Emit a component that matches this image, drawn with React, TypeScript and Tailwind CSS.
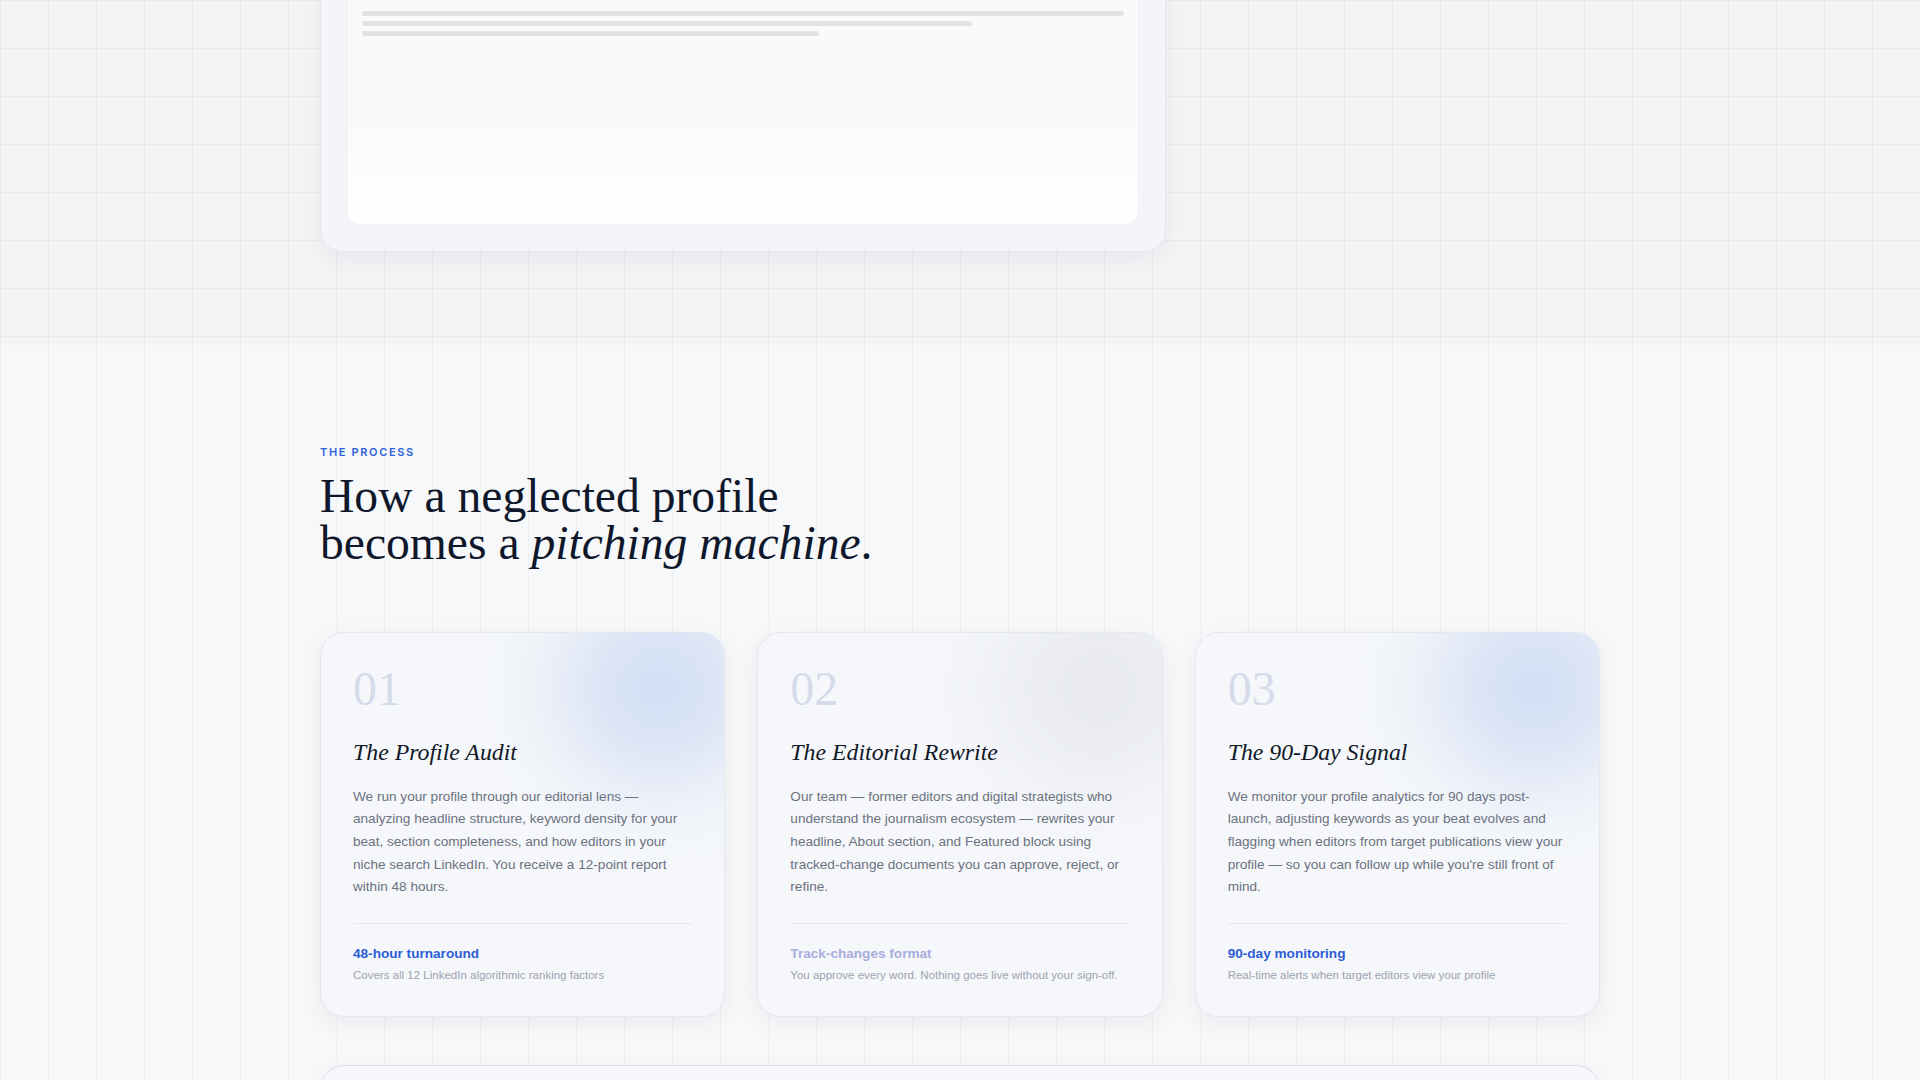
import React from 'react';

type Step = {
  num: string;
  title: string;
  body: string;
  label: string;
  labelClass: string;
  note: string;
  blobClass: string;
};

const steps: Step[] = [
  {
    num: '01',
    title: 'The Profile Audit',
    body: 'We run your profile through our editorial lens — analyzing headline structure, keyword density for your beat, section completeness, and how editors in your niche search LinkedIn. You receive a 12-point report within 48 hours.',
    label: '48-hour turnaround',
    labelClass: 'text-[#2b5cd6]',
    note: 'Covers all 12 LinkedIn algorithmic ranking factors',
    blobClass: 'bg-[#c6d5f3]',
  },
  {
    num: '02',
    title: 'The Editorial Rewrite',
    body: 'Our team — former editors and digital strategists who understand the journalism ecosystem — rewrites your headline, About section, and Featured block using tracked-change documents you can approve, reject, or refine.',
    label: 'Track-changes format',
    labelClass: 'text-[#a7aedd]',
    note: 'You approve every word. Nothing goes live without your sign-off.',
    blobClass: 'bg-[#e2e4eb]',
  },
  {
    num: '03',
    title: 'The 90-Day Signal',
    body: "We monitor your profile analytics for 90 days post-launch, adjusting keywords as your beat evolves and flagging when editors from target publications view your profile — so you can follow up while you're still front of mind.",
    label: '90-day monitoring',
    labelClass: 'text-[#2b5cd6]',
    note: 'Real-time alerts when target editors view your profile',
    blobClass: 'bg-[#c6d5f3]',
  },
];

function StepCard({ step }: { step: Step }) {
  return (
    <div className="relative overflow-hidden rounded-[24px] border border-[#e4e7ee] bg-[#f5f7fa] p-8 shadow-[0_6px_24px_rgba(15,23,42,0.06)]">
      <div className={`pointer-events-none absolute right-[-36px] top-[-40px] h-[190px] w-[200px] rounded-full opacity-70 blur-[44px] ${step.blobClass}`} />
      <div className="relative">
        <div className="font-['Liberation_Serif',serif] text-[48px] leading-none text-[#d6dbeb]">{step.num}</div>
        <h3 className="mt-6 font-['Liberation_Serif',serif] text-[23.8px] italic leading-[1.3] text-[#111827]">{step.title}</h3>
        <p className="mt-[18px] font-['Liberation_Sans',sans-serif] text-[13.6px] leading-[1.67] text-[#6b7280]">{step.body}</p>
        <div className="mt-6 border-t border-[#e7e9ee] pt-5 font-['Liberation_Sans',sans-serif]">
          <div className={`text-[13.6px] font-bold leading-[1.4] ${step.labelClass}`}>{step.label}</div>
          <div className="mt-1 text-[11.5px] leading-[1.5] text-[#9ca3af]">{step.note}</div>
        </div>
      </div>
    </div>
  );
}

export default function App() {
  return (
    <div className="min-h-screen overflow-hidden bg-[#f7f8fa]">
      {/* hero tail with grid */}
      <section className="flow-root h-[345px] bg-[#f3f4f6] bg-[linear-gradient(to_right,#e8eaed_1px,transparent_1px),linear-gradient(to_bottom,#e8eaed_1px,transparent_1px)] bg-[size:48px_48px]">
        <div className="mx-auto w-[1280px]">
          <div className="-mt-[200px] h-[452px] w-[846px] rounded-[22px] border border-[#e5e7eb] bg-[#f4f5f8] p-[26px] shadow-[0_8px_24px_rgba(15,23,42,0.05)]">
            <div className="flex h-full flex-col rounded-[14px] bg-[linear-gradient(to_bottom,#f9fafa_75%,#ffffff)] px-[15px] pt-[184px] shadow-[inset_0_0_0_1px_rgba(229,231,235,0.5)]">
              <div className="flex flex-col gap-[5px]">
                <div className="h-[5px] w-full rounded-full bg-[#e1e2e5]" />
                <div className="h-[5px] w-[80%] rounded-full bg-[#e1e2e5]" />
                <div className="h-[5px] w-[60%] rounded-full bg-[#e1e2e5]" />
              </div>
            </div>
          </div>
        </div>
      </section>

      {/* process */}
      <section className="bg-[linear-gradient(to_right,#eef0f3_1px,transparent_1px)] bg-[size:48px_100%] pb-24 pt-[99px]">
        <div className="mx-auto w-[1280px]">
          <div className="font-['Inter',sans-serif] text-[11px] font-semibold leading-[1.5] tracking-[0.15em] text-[#2d62d8]">THE PROCESS</div>
          <h2 className="mt-3 font-['Liberation_Serif',serif] text-[47.6px] leading-none text-[#0f172a]">
            How a neglected profile
            <br />
            becomes a <em>pitching machine</em>.
          </h2>

          <div className="mt-16 grid grid-cols-3 gap-8">
            {steps.map((s) => (
              <StepCard key={s.num} step={s} />
            ))}
          </div>

          <div className="mt-12 h-[220px] rounded-[24px] border border-[#e4e7ee] border-t-[#d9dcef] bg-[#f6f7fa] shadow-[0_6px_24px_rgba(15,23,42,0.05)]" />
        </div>
      </section>
    </div>
  );
}
